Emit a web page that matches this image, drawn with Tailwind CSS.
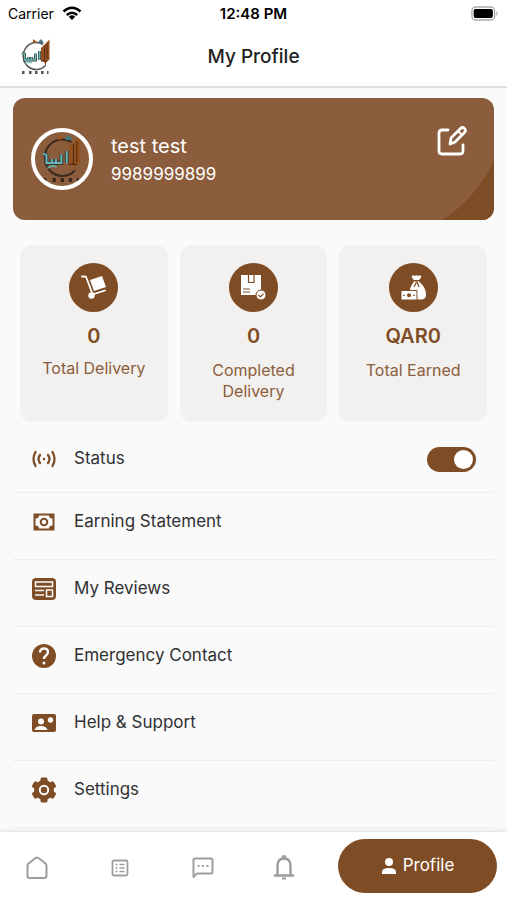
<!DOCTYPE html>
<html lang="en">
<head>
<meta charset="utf-8">
<meta name="viewport" content="width=device-width, initial-scale=1">
<title>My Profile</title>
<script src="https://cdn.jsdelivr.net/npm/@tailwindcss/browser@4"></script>
</head>
<body class="flex min-h-screen flex-col bg-[#fafafa] font-[Inter,Roboto,sans-serif] text-[#303033]">
<svg class="hidden">
  <symbol id="emblem" viewBox="0 0 32 40">
    <path d="M23 7.500A13 13.500 0 1 0 25.500 28.500" fill="none" stroke="currentColor" stroke-width="1.500"/>
    <path d="M21 11l8.500-8.500v20l-3.500 3v4.500l-2-5.500h-3z" fill="#94501f"/>
    <path d="M24.500 9v15.500M27 7v15M21 24h6" fill="none" stroke="#4a2911" stroke-width=".8"/>
    <path d="M2 16l2.500 1v6h4v-3v3h3v-3v3h4v-6.500M19.500 14v9" fill="none" stroke="#343b3b" stroke-width="2.800"/>
    <path d="M2 16l2.500 1v6h4v-3v3h3v-3v3h4v-6.500M19.500 14v9" fill="none" stroke="#65b8b5" stroke-width="1.400"/>
    <path d="M5 27l4-2 3 1" fill="none" stroke="#65b8b5"/>
    <path d="M13 2l4 3-4 1z" fill="#a5531c"/><path d="M18 5l3-3 3 4h-5z" fill="#477779"/>
    <path d="M2 34h2.500v3H2zM9 34h2.500v3H9zM15 34h2.500v3H15zM21 34h2.500v3H21zM27 34h1.500v3H27z" fill="currentColor"/>
  </symbol>
</svg>
<header class="border-b-2 border-[#e0e0e0] bg-white">
  <div class="grid h-7 grid-cols-3 items-center px-2 text-sm text-black">
    <div class="flex items-center gap-2">Carrier
      <svg class="h-4 w-5" viewBox="0 0 20 16" fill="none" stroke="#000" stroke-width="2.600"><path d="M1.500 5.500Q10-2 18.500 5.500M4.800 9Q10 4.500 15.200 9"/><path d="M6.800 10.700Q10 8 13.200 10.700L10 14z" fill="#000" stroke="none"/></svg>
    </div>
    <div class="text-center text-[15px] font-semibold whitespace-nowrap">12:48 PM</div>
    <svg class="h-4 w-7 justify-self-end" viewBox="0 0 32 16" preserveAspectRatio="none"><rect x="1" y="1" width="26" height="13" rx="4" fill="#fff" stroke="#aaa" stroke-width="1.500"/><rect x="3" y="3" width="22" height="9" rx="2" fill="#000"/><path d="M29 5q3 2.500 0 5z" fill="#aaa"/></svg>
  </div>
  <div class="grid h-[58px] grid-cols-[40px_1fr_40px] items-center px-4">
    <svg class="ml-1 h-10 w-8 text-[#555]" role="img" aria-label="Logo"><use href="#emblem"/></svg>
    <h1 class="text-center text-[19px] font-medium text-[#222]">My Profile</h1>
  </div>
</header>

<main class="flex-1 px-[13px] pt-2.5">
  <section class="relative flex h-[122px] items-center overflow-hidden rounded-xl bg-[#8b5d3c] px-[18px] text-white">
    <svg class="absolute right-0 bottom-0 h-[60px] w-[54px]" viewBox="0 0 54 60"><path d="M54 0Q35 40 2 60H54z" fill="#7d4d26"/></svg>
    <div class="flex size-[62px] items-center justify-center overflow-hidden rounded-full border-4 border-white">
      <svg class="h-[54px] w-[46px] text-[#3d2a1f]" role="img" aria-label="Profile photo"><use href="#emblem"/></svg>
    </div>
    <div class="ml-[18px] flex-1 pt-0.5">
      <div class="text-xl leading-7">test test</div>
      <div class="text-[17px] leading-7">9989999899</div>
    </div>
    <button class="relative mr-2 mb-9" aria-label="Edit profile">
      <svg class="size-8" viewBox="0 0 32 32" fill="none" stroke="#fff" stroke-width="2.800" stroke-linecap="round" stroke-linejoin="round"><path d="M12 5H6q-3 0-3 3v18q0 3 3 3h18q3 0 3-3v-6"/><path d="M14 19l1-6L24.500 3.500q2-2 4 0t0 4L19 17z" stroke-width="2.800"/><path d="M22.500 6.500l3.500 3.500" stroke-width="2"/></svg>
    </button>
  </section>

  <section class="grid grid-cols-3 gap-3 px-[7px] pt-[25px] text-center text-[#7f4d25]">
    <article class="flex h-[177px] flex-col items-center rounded-xl bg-[#f2f1ef] pt-[18px]">
      <svg class="size-[49px]" viewBox="0 0 49 49"><circle cx="24.500" cy="24.500" r="24.500" fill="#7f4d25"/><path d="M13 13.500h3q1 0 1.500 1.500l6 16" fill="none" stroke="#fff" stroke-width="1.800" stroke-linecap="round"/><path d="M21 17l12-4 4 11-12 4z" fill="#fff"/><path d="M25 31l11-3.500" stroke="#fff" stroke-width="1.800" stroke-linecap="round"/><circle cx="22.500" cy="32.500" r="3.200" fill="#fff"/></svg>
      <div class="mt-2.5 text-xl leading-7 font-semibold">0</div>
      <div class="mt-2 leading-[21px] text-[#8b5d3c]">Total Delivery</div>
    </article>
    <article class="flex h-[177px] flex-col items-center rounded-xl bg-[#f2f1ef] pt-[18px]">
      <svg class="size-[49px]" viewBox="0 0 49 49"><circle cx="24.500" cy="24.500" r="24.500" fill="#7f4d25"/><path d="M12 12h20v20H12z" fill="#fff"/><path d="M19.500 12v7.500h5.500V12M14 26h7M14 29h7" fill="none" stroke="#7f4d25" stroke-width="1.200"/><circle cx="32" cy="32" r="5" fill="#fff" stroke="#7f4d25"/><path d="M29.500 32l1.800 1.800 3.200-3.200" fill="none" stroke="#7f4d25" stroke-width="1.200"/></svg>
      <div class="mt-2.5 text-xl leading-7 font-semibold">0</div>
      <div class="mt-2.5 leading-[21px] text-[#8b5d3c]">Completed<br>Delivery</div>
    </article>
    <article class="flex h-[177px] flex-col items-center rounded-xl bg-[#f2f1ef] pt-[18px]">
      <svg class="size-[49px]" viewBox="0 0 49 49"><circle cx="24.500" cy="24.500" r="24.500" fill="#7f4d25"/><path d="M25 17q-3-3-2-4 1-1.500 3 0 1.500-1.500 3 0 2-1.500 3 0 1 1-2 4z" fill="#fff"/><path d="M25 18.500h5q7 6 7 13 0 5-5 5h-8q-5 0-4-6 1-7 5-12z" fill="#fff"/><path d="M27.500 19l-2.500 5M28 19l2 5" stroke="#7f4d25" stroke-width="1.200"/><path d="M12 27.500h16V37H12z" fill="#fff" stroke="#7f4d25"/><circle cx="20" cy="32.300" r="2" fill="#7f4d25"/><path d="M14 32.300h2M24 32.300h2" stroke="#7f4d25"/></svg>
      <div class="mt-2.5 text-xl leading-7 font-semibold">QAR0</div>
      <div class="mt-2.5 leading-[21px] text-[#8b5d3c]">Total Earned</div>
    </article>
  </section>

  <nav aria-label="Profile options" class="text-[17px]">
    <div class="border-b border-[#eeeeee] px-[18px] pt-4 pb-3">
      <label class="flex h-[42px] items-center gap-[17px]">
        <svg class="size-[26px]" viewBox="0 0 26 26" fill="none" stroke="#7f4d25" stroke-width="2.300" stroke-linecap="round"><path d="M4.500 6q-4 7 0 14M21.500 6q4 7 0 14M9 9q-3 4 0 8M17 9q3 4 0 8"/><circle cx="13" cy="13" r="1.300" fill="#7f4d25" stroke="none"/></svg>
        <span class="flex-1">Status</span>
        <input type="checkbox" role="switch" checked class="h-[25px] w-[49px] appearance-none rounded-full bg-[#b8b8b8] p-[3px] before:block before:size-[19px] before:rounded-full before:bg-white checked:bg-[#7f4d25] checked:before:ml-auto">
      </label>
    </div>
    <a href="#earnings" class="block border-b border-[#eeeeee] px-[18px] pt-2 pb-4">
      <span class="flex h-[42px] items-center gap-[17px]">
        <svg class="size-[26px]" viewBox="0 0 26 26"><path fill="#7f4d25" d="M2.500 4.500h21v17h-21z"/><path d="M8 6.500h10q0 3 3.500 3v7q-3.500 0-3.500 3H8q0-3-3.500-3v-7q3.500 0 3.500-3z" fill="#fafafa"/><circle cx="13" cy="13" r="3.300" fill="none" stroke="#7f4d25" stroke-width="2"/></svg>
        Earning Statement</span>
    </a>
    <a href="#reviews" class="block border-b border-[#eeeeee] px-[18px] pt-2 pb-4">
      <span class="flex h-[42px] items-center gap-[17px]">
        <svg class="size-[26px]" viewBox="0 0 26 26" fill="none"><rect x="1" y="2" width="24" height="22" rx="4" fill="#7f4d25"/><path d="M4.500 6h17v4.500h-17zM4 14.500h9M4 19h9M15.500 14h6v6.500h-6z" stroke="#fafafa" stroke-width="1.500"/></svg>
        My Reviews</span>
    </a>
    <a href="#emergency" class="block border-b border-[#eeeeee] px-[18px] pt-2 pb-4">
      <span class="flex h-[42px] items-center gap-[17px]">
        <svg class="size-[26px]" viewBox="0 0 26 26"><circle cx="13" cy="13" r="12" fill="#7f4d25"/><path d="M9 9.500q0-4 4-4t4 3.500q0 2-2 3.500t-2 3.500" fill="none" stroke="#fafafa" stroke-width="2.400"/><circle cx="13" cy="20" r="1.500" fill="#fafafa"/></svg>
        Emergency Contact</span>
    </a>
    <a href="#help" class="block border-b border-[#eeeeee] px-[18px] pt-2 pb-4">
      <span class="flex h-[42px] items-center gap-[17px]">
        <svg class="size-[26px]" viewBox="0 0 26 26"><rect x="1" y="4" width="24" height="18" rx="2" fill="#7f4d25"/><g fill="#fafafa"><circle cx="10" cy="11.500" r="3"/><path d="M3.500 20q1-4 6.500-4t6.500 4z"/><circle cx="19.500" cy="10" r="2.700"/></g></svg>
        Help &amp; Support</span>
    </a>
    <a href="#settings" class="block border-b border-[#eeeeee] px-[18px] pt-2 pb-4">
      <span class="flex h-[42px] items-center gap-[17px]">
        <svg class="size-[26px]" viewBox="0 0 26 26"><g fill="#7f4d25"><circle cx="13" cy="13" r="10"/><rect id="t" x="9.500" y="0.500" width="7" height="25" rx="1.500"/><use href="#t" transform="rotate(60 13 13)"/><use href="#t" transform="rotate(120 13 13)"/></g><circle cx="13" cy="13" r="4.200" fill="none" stroke="#fafafa" stroke-width="2"/></svg>
        Settings</span>
    </a>
  </nav>
</main>

<nav aria-label="Main" class="sticky bottom-0 flex h-[68px] items-center bg-white pr-2.5 shadow-[0_-1px_4px_rgba(0,0,0,0.12)]">
  <div class="grid flex-1 grid-cols-4 justify-items-center pt-1 pr-3.5">
    <a href="#home" aria-label="Home" class="-ml-2"><svg class="size-7" viewBox="-2 -2 28 28" fill="none" stroke="#9b9d9e" stroke-width="2" stroke-linejoin="round"><path d="M2.500 9.500q0-1 1-2l7-5.500q1.500-1 3 0l7 5.500q1 1 1 2V20q0 2-2 2h-15q-2 0-2-2z"/></svg></a>
    <a href="#orders" aria-label="Orders" class="-ml-1"><svg class="size-7" viewBox="-2 -2 28 28" fill="none" stroke="#9b9d9e"><rect x="4.500" y="4.500" width="15" height="15" rx="1.500" stroke-width="1.800"/><path d="M7.500 8.500h2M11.500 8.500h5M7.500 12h2M11.500 12h5M7.500 15.500h2M11.500 15.500h5" stroke-width="1.500"/></svg></a>
    <a href="#messages" aria-label="Messages"><svg class="size-7" viewBox="-2 -2 28 28" fill="none" stroke="#9b9d9e" stroke-width="2" stroke-linejoin="round"><path d="M2.500 21V4q0-1.500 1.500-1.500h16q1.500 0 1.500 1.500v12q0 1.500-1.500 1.500H6z"/><path d="M6.500 10h2M11 10h2M15.500 10h2"/></svg></a>
    <a href="#notifications" aria-label="Notifications"><svg class="size-7" viewBox="0 0 28 28" fill="none" stroke="#9b9d9e" stroke-width="2.400"><path d="M7.500 21.500V12q0-7.500 6.500-7.500t6.500 7.500v9.500M4 21.500h20"/><path d="M12.500 4q0-2 1.500-2t1.500 2M12 24.500h4" stroke-width="2"/></svg></a>
  </div>
  <a href="#profile" aria-current="page" class="flex h-[54px] w-[159px] items-center justify-center gap-1.5 rounded-full bg-[#7f4d25] text-[17px] text-white"><svg class="size-4" viewBox="0 0 16 16" fill="#fff"><circle cx="8" cy="4" r="4"/><path d="M1 16v-2q0-4 7-4t7 4v2z"/></svg>Profile</a>
</nav>
</body>
</html>
